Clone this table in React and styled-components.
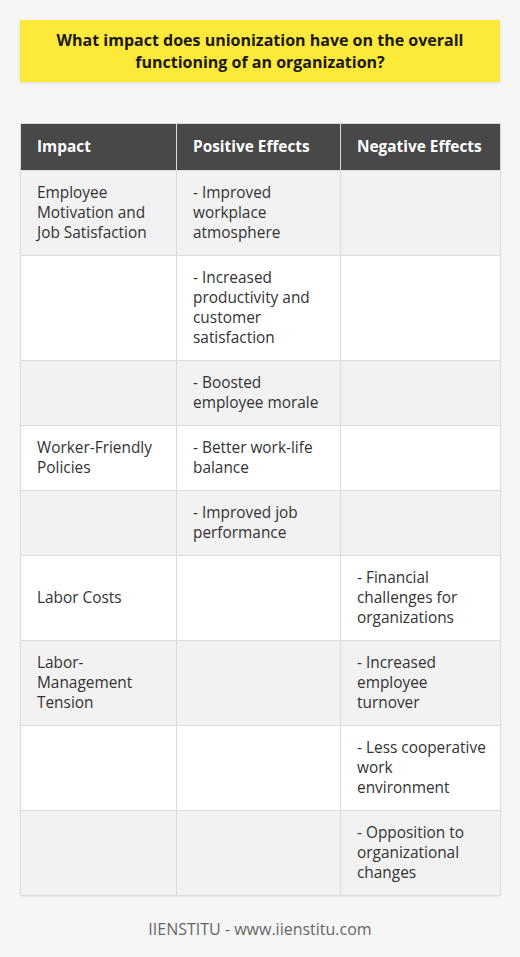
import React from "react";
import styled, { createGlobalStyle } from "styled-components";

const Global = createGlobalStyle`
  html, body { margin: 0; padding: 0; background: #f6f6f6; }
  body { font-family: "Open Sans", "Liberation Sans", sans-serif; }
`;

const Page = styled.div`
  padding: 20px 20px 0;
  display: flex;
  flex-direction: column;
`;

const Title = styled.h1`
  margin: 0;
  background: #fde93a;
  box-shadow: 0 1px 3px rgba(0,0,0,0.12);
  padding: 9px 20px;
  font-size: 16px;
  line-height: 22px;
  font-weight: 700;
  color: #1a1a1a;
  text-align: center;
`;

const Table = styled.table`
  margin-top: 41px;
  width: 480px;
  border-collapse: collapse;
  table-layout: fixed;
  box-shadow: 0 1px 2px rgba(0,0,0,0.06);
`;

const Th = styled.th`
  background: #484848;
  color: #fff;
  font-weight: 700;
  font-size: 15.4px;
  line-height: 20px;
  text-align: left;
  padding: 13px 8px 13px 16px;
  border: 1px solid #dcdcdc;
`;

const Tr = styled.tr`
  background: ${(p) => (p.$alt ? "#f2f2f2" : "#ffffff")};
`;

const Td = styled.td`
  font-size: 15.4px;
  line-height: 20px;
  color: #333;
  padding: 12px ${(p) => p.$padRight}px 12px 16px;
  border: 1px solid #dcdcdc;
  vertical-align: middle;
`;

const Footer = styled.div`
  text-align: center;
  font-size: 16px;
  color: #666;
  margin-top: 22px;
  line-height: 22px;
`;

const colPad = [12, 20, 12];

const rows = [
  ["Employee Motivation and Job Satisfaction", "- Improved workplace atmosphere", ""],
  ["", "- Increased productivity and customer satisfaction", ""],
  ["", "- Boosted employee morale", ""],
  ["Worker-Friendly Policies", "- Better work-life balance", ""],
  ["", "- Improved job performance", ""],
  ["Labor Costs", "", "- Financial challenges for organizations"],
  ["Labor-Management Tension", "", "- Increased employee turnover"],
  ["", "", "- Less cooperative work environment"],
  ["", "", "- Opposition to organizational changes"],
];

export default function App() {
  return (
    <>
      <Global />
      <Page>
        <Title>What impact does unionization have on the overall functioning of an organization?</Title>
        <Table>
          <colgroup>
            <col style={{ width: 156 }} />
            <col style={{ width: 164 }} />
            <col style={{ width: 160 }} />
          </colgroup>
          <thead>
            <tr>
              <Th>Impact</Th>
              <Th>Positive Effects</Th>
              <Th>Negative Effects</Th>
            </tr>
          </thead>
          <tbody>
            {rows.map((r, i) => (
              <Tr key={i} $alt={i % 2 === 0}>
                {r.map((c, j) => (
                  <Td key={j} $padRight={colPad[j]}>{c}</Td>
                ))}
              </Tr>
            ))}
          </tbody>
        </Table>
        <Footer>IIENSTITU - www.iienstitu.com</Footer>
      </Page>
    </>
  );
}
